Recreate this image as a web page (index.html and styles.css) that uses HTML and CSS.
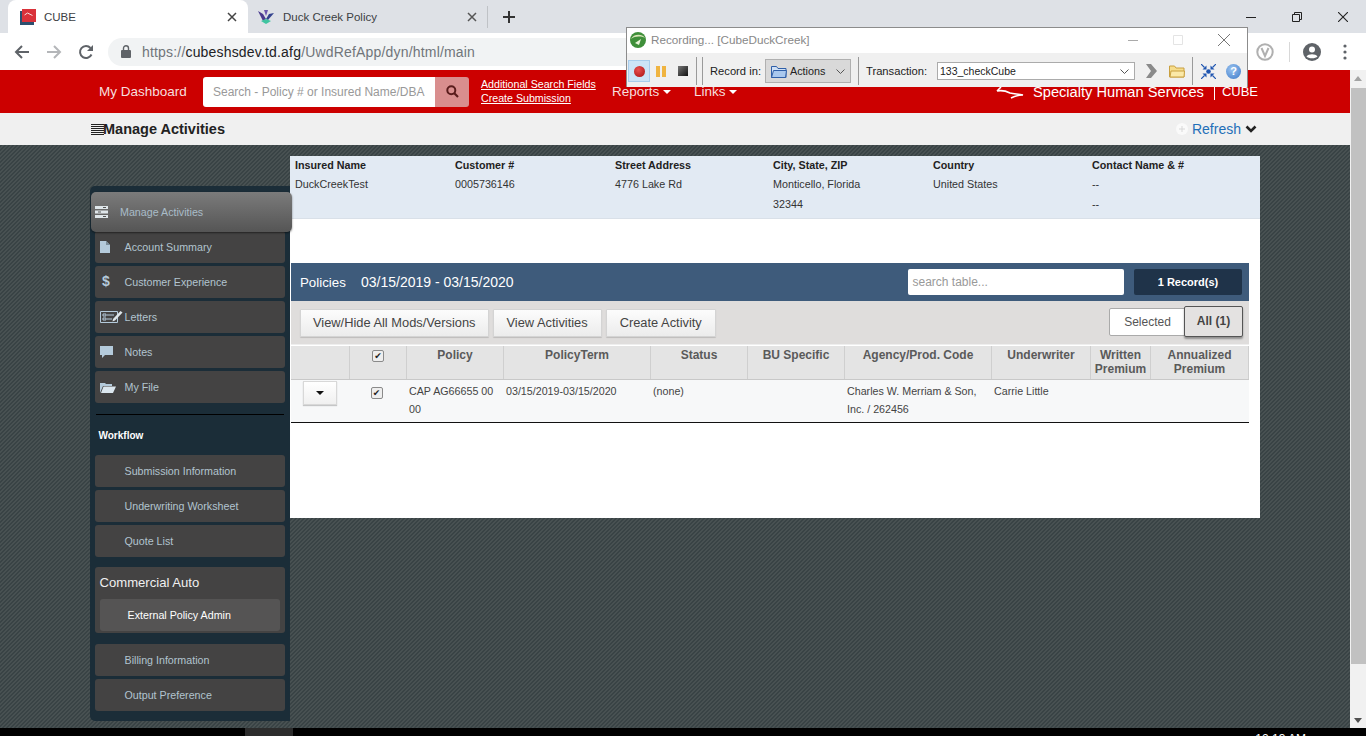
FILE: index.html
```html
<!doctype html>
<html>
<head>
    <meta charset="utf-8">
    <title>CUBE</title>
    <link rel="stylesheet" href="styles.css">
</head>
<body>

<!-- browser frame -->
<div class="tabstrip">
    <div class="tab tab-active">
        <svg class="favicon" width="16" height="16" viewBox="0 0 16 16"><rect x="0" y="2" width="14" height="14" fill="#2c4f6e"/><rect x="2" y="0" width="14" height="13" fill="#d9323a"/><path d="M4.5 6l3-2 5 2.5" stroke="#f8dcdc" fill="none"/></svg>
        <span class="tab-title">CUBE</span>
        <svg class="tab-x" width="10" height="10" viewBox="0 0 10 10"><path d="M1 1l8 8M9 1l-8 8" stroke="#444" stroke-width="1.5"/></svg>
    </div>
    <div class="tab">
        <svg class="favicon" width="16" height="14" viewBox="0 0 16 14"><path d="M0 1l5 3 3 5-3 2z" fill="#4a3a8e"/><path d="M16 3l-5 1-3 5 2 1z" fill="#33428e"/><path d="M6 0l2 6 2-6z" fill="#6a55ae"/><path d="M3 11l5-2 5 2-5 3z" fill="#3fc4a0"/></svg>
        <span class="tab-title">Duck Creek Policy</span>
        <svg class="tab-x" width="10" height="10" viewBox="0 0 10 10"><path d="M1 1l8 8M9 1l-8 8" stroke="#555" stroke-width="1.5"/></svg>
    </div>
    <span class="tab-sep"></span>
    <svg class="tab-new" width="12" height="12" viewBox="0 0 12 12"><path d="M6 0v12M0 6h12" stroke="#333" stroke-width="2"/></svg>
    <div class="win-btns">
        <svg width="10" height="10" viewBox="0 0 10 10"><path d="M0 5.5h10" stroke="#222"/></svg>
        <svg width="10" height="10" viewBox="0 0 10 10"><path d="M.5 2.5h7v7h-7zM2.5 2.5v-2h7v7h-2" fill="none" stroke="#222"/></svg>
        <svg width="10" height="10" viewBox="0 0 10 10"><path d="M0 0l10 10M10 0L0 10" stroke="#222" stroke-width="1.1"/></svg>
    </div>
</div>
<div class="toolbar">
    <svg class="nav-btn" width="16" height="16" viewBox="0 0 16 16"><path d="M15 8H2M8 2L2 8l6 6" fill="none" stroke="#5f6368" stroke-width="2"/></svg>
    <svg class="nav-btn" width="16" height="16" viewBox="0 0 16 16"><path d="M1 8h13M8 2l6 6-6 6" fill="none" stroke="#b4b6b9" stroke-width="2"/></svg>
    <svg class="nav-btn" width="16" height="16" viewBox="0 0 16 16"><path d="M13.5 10.5A6 6 0 1 1 12.5 4" fill="none" stroke="#5f6368" stroke-width="2"/><path d="M15 1v6H9z" fill="#5f6368"/></svg>
    <div class="omnibox">
        <svg width="10" height="13" viewBox="0 0 10 13"><rect x="0" y="5" width="10" height="8" rx="1" fill="#5f6368"/><path d="M2.5 5V3.2a2.5 2.5 0 0 1 5 0V5" fill="none" stroke="#5f6368" stroke-width="1.4"/></svg>
        <span class="url"><i>https://</i>cubeshsdev.td.afg<i>/UwdRefApp/dyn/html/main</i></span>
    </div>
    <div class="toolbar-right">
        <svg width="18" height="18" viewBox="0 0 18 18"><circle cx="9" cy="9" r="7.7" fill="none" stroke="#b0b0b0" stroke-width="2"/><path d="M5.5 5l3.5 8 3.5-8" fill="none" stroke="#b0b0b0" stroke-width="2"/></svg>
        <span class="toolbar-sep"></span>
        <svg width="20" height="20" viewBox="0 0 20 20"><circle cx="10" cy="10" r="9" fill="#5f6368"/><circle cx="10" cy="7.5" r="3" fill="#fff"/><path d="M4.5 14.5c2-3 9-3 11 0-2 2.4-9 2.4-11 0z" fill="#fff"/></svg>
        <svg class="toolbar-dots" width="4" height="16" viewBox="0 0 4 16"><circle cx="2" cy="2" r="1.6" fill="#5f6368"/><circle cx="2" cy="8" r="1.6" fill="#5f6368"/><circle cx="2" cy="14" r="1.6" fill="#5f6368"/></svg>
    </div>
</div>

<div class="viewport">
    <div class="page">
        <div class="header">
            <a class="dash">My Dashboard</a>
            <div class="search">
                <span class="search-input">Search - Policy # or Insured Name/DBA</span>
                <span class="search-btn"><svg width="13" height="13" viewBox="0 0 13 13"><circle cx="5.3" cy="5.3" r="4" fill="none" stroke="#5a1c1c" stroke-width="2"/><path d="M8.3 8.3L12 12" stroke="#5a1c1c" stroke-width="2.2"/></svg></span>
            </div>
            <div class="search-links">
                <a>Additional Search Fields</a>
                <a>Create Submission</a>
            </div>
            <a class="menu">Reports <b class="caret"></b></a>
            <a class="menu menu-links">Links <b class="caret"></b></a>
            <div class="brand">
                <svg width="30" height="16" viewBox="0 0 30 16"><path d="M1 7L5 3M1 7c5-1 9 0 13 2 4 1 8 1 13 2-4 0-8 1-12 3" fill="none" stroke="#fff" stroke-width="1.6"/></svg>
                <span class="brand-name">Specialty Human Services</span>
                <span class="brand-bar"></span>
                <span class="brand-cube">CUBE</span>
            </div>
        </div>
        <div class="subheader">
            <svg width="13" height="11" viewBox="0 0 13 11"><path d="M0 .5h13M0 2.5h13M0 4.5h13M0 6.5h13M0 8.5h13M0 10.5h13" stroke="#222"/></svg>
            <span class="sub-title">Manage Activities</span>
            <div class="sub-right">
                <svg width="12" height="12" viewBox="0 0 12 12"><circle cx="6" cy="6" r="6" fill="#fafafa"/><path d="M6 3v6M3 6h6" stroke="#d8d8d8"/></svg>
                <a class="refresh">Refresh</a>
                <svg width="12" height="9" viewBox="0 0 12 9"><path d="M1.5 1.5L6 6l4.5-4.5" fill="none" stroke="#222" stroke-width="2.6"/></svg>
            </div>
        </div>

        <div class="main">
            <div class="sidebar">
                <div class="nav-item nav-active">
                    <span class="nav-ico"><svg width="13" height="12" viewBox="0 0 13 12"><path d="M0 0h13v3H0zM0 4.5h13v3H0zM0 9h13v3H0z" fill="#dfe6ea"/><path d="M8 1.5h3M3 6h3M8 10.5h3" stroke="#555"/></svg></span>
                    Manage Activities
                </div>
                <div class="nav-list">
                    <div class="nav-item"><span class="nav-ico"><svg width="10" height="12" viewBox="0 0 10 12"><path d="M0 0h6l4 4v8H0z" fill="#b4cadb"/><path d="M6 0v4h4" fill="#7b8d9a"/></svg></span>Account Summary</div>
                    <div class="nav-item"><span class="nav-ico nav-dollar">$</span>Customer Experience</div>
                    <div class="nav-item"><span class="nav-ico"><svg width="23" height="13" viewBox="0 0 23 13"><path d="M.5 1.5h17v11H.5z" fill="none" stroke="#b4cadb"/><path d="M3 4h3v2H3zM3 8h3v2H3zM7 5h7M7 9h5" stroke="#b4cadb" fill="none"/><path d="M13 9L20.5 1 22.5 2.5 15 10.5l-2.5 1z" fill="#dfe6ea"/></svg></span>Letters</div>
                    <div class="nav-item"><span class="nav-ico"><svg width="13" height="12" viewBox="0 0 13 12"><path d="M0 0h13v9H5l-3 3V9H0z" fill="#b4cadb"/></svg></span>Notes</div>
                    <div class="nav-item"><span class="nav-ico"><svg width="16" height="12" viewBox="0 0 16 12"><path d="M0 12V2h5l1 1h6v2H3z" fill="#b4cadb"/><path d="M3.5 5.5H16L13 12H1z" fill="#dbe6ee"/></svg></span>My File</div>
                </div>
                <div class="nav-rule"></div>
                <div class="nav-head">Workflow</div>
                <div class="nav-list">
                    <div class="nav-item">Submission Information</div>
                    <div class="nav-item">Underwriting Worksheet</div>
                    <div class="nav-item">Quote List</div>
                </div>
                <div class="nav-group">
                    <div class="group-title">Commercial Auto</div>
                    <div class="nav-item group-item">External Policy Admin</div>
                </div>
                <div class="nav-list">
                    <div class="nav-item">Billing Information</div>
                    <div class="nav-item">Output Preference</div>
                </div>
            </div>

            <div class="content">
                <div class="info">
                    <div><b>Insured Name</b><span>DuckCreekTest</span></div>
                    <div><b>Customer #</b><span>0005736146</span></div>
                    <div><b>Street Address</b><span>4776 Lake Rd</span></div>
                    <div><b>City, State, ZIP</b><span>Monticello, Florida</span><span>32344</span></div>
                    <div><b>Country</b><span>United States</span></div>
                    <div><b>Contact Name &amp; #</b><span>--</span><span>--</span></div>
                </div>
                <div class="policies">
                    <div class="pol-bar">
                        <span class="pol-name">Policies</span>
                        <span class="pol-dates">03/15/2019 - 03/15/2020</span>
                        <span class="pol-search">search table...</span>
                        <span class="pol-count">1 Record(s)</span>
                    </div>
                    <div class="pol-tools">
                        <span class="btn">View/Hide All Mods/Versions</span>
                        <span class="btn">View Activities</span>
                        <span class="btn">Create Activity</span>
                        <div class="toggle">
                            <span class="toggle-off">Selected</span>
                            <span class="toggle-on">All (1)</span>
                        </div>
                    </div>
                    <div class="tbl-head tbl-cols">
                        <div></div>
                        <div><input type="checkbox" class="check" checked></div>
                        <div>Policy</div>
                        <div>PolicyTerm</div>
                        <div>Status</div>
                        <div>BU Specific</div>
                        <div>Agency/Prod. Code</div>
                        <div>Underwriter</div>
                        <div>Written Premium</div>
                        <div>Annualized Premium</div>
                    </div>
                    <div class="tbl-row tbl-cols">
                        <div><span class="row-btn"><b class="caret caret-dark"></b></span></div>
                        <div class="cell-check"><input type="checkbox" class="check" checked></div>
                        <div>CAP AG66655 00 00</div>
                        <div>03/15/2019-03/15/2020</div>
                        <div class="cell-status">(none)</div>
                        <div></div>
                        <div>Charles W. Merriam &amp; Son, Inc. / 262456</div>
                        <div>Carrie Little</div>
                        <div></div>
                        <div></div>
                    </div>
                </div>
            </div>
        </div>
    </div>
    <div class="scrollbar">
        <b class="arrow-up"></b>
        <div class="thumb"></div>
        <b class="arrow-down"></b>
    </div>
</div>

<div class="taskbar">
    <span class="task-slot"></span>
    <span class="task-clock">12:13 AM</span>
</div>

<!-- recorder window floats over the browser -->
<div class="recorder">
    <div class="rec-title">
        <svg width="16" height="16" viewBox="0 0 16 16"><circle cx="8" cy="8" r="8" fill="#3f8f3a"/><path d="M1 7c2-5 11-6 14-1-4-2-10-2-14 1z" fill="#d8e6b8"/><path d="M5 11l6-4-2 6z" fill="#eaf4d8"/></svg>
        <span class="rec-name">Recording... [CubeDuckCreek]</span>
        <div class="rec-btns">
            <svg width="10" height="10" viewBox="0 0 10 10"><path d="M0 5.5h10" stroke="#aaa"/></svg>
            <svg width="10" height="10" viewBox="0 0 10 10"><path d="M.5.5h9v9h-9z" fill="none" stroke="#e4e4e4"/></svg>
            <svg width="12" height="12" viewBox="0 0 12 12"><path d="M0 0l12 12M12 0L0 12" stroke="#777"/></svg>
        </div>
    </div>
    <div class="rec-tools">
        <span class="rec-record"><i></i></span>
        <svg class="rec-pause" width="10" height="11" viewBox="0 0 10 11"><path d="M0 0h4v11H0zM6 0h4v11H6z" fill="#f0b440"/></svg>
        <span class="rec-stop"></span>
        <span class="rec-sep rec-sep-a"></span>
        <span class="rec-sep rec-sep-b"></span>
        <span class="rec-label">Record in:</span>
        <span class="rec-actions">
            <svg width="16" height="13" viewBox="0 0 16 13"><path d="M.5 12.5V1.5h5l1.5 2h8v9z" fill="#cfe0f5" stroke="#2f5fa8"/><path d="M.5 12.5l2-7h13l-1 7z" fill="#a9c8ee" stroke="#2f5fa8"/></svg>
            Actions
            <svg class="rec-chev" width="9" height="5" viewBox="0 0 9 5"><path d="M.5.5l4 4 4-4" fill="none" stroke="#555"/></svg>
        </span>
        <span class="rec-sep rec-sep-c"></span>
        <span class="rec-label rec-label-t">Transaction:</span>
        <span class="rec-combo">133_checkCube
            <svg class="rec-chev" width="9" height="5" viewBox="0 0 9 5"><path d="M.5.5l4 4 4-4" fill="none" stroke="#555"/></svg>
        </span>
        <svg class="rec-go" width="11" height="14" viewBox="0 0 11 14"><path d="M0 0h5l6 7-6 7H0l5-7z" fill="#8a8a8a"/></svg>
        <svg class="rec-open" width="16" height="14" viewBox="0 0 16 14"><path d="M.5 13V2h5l1.5 2h8v9z" fill="#f6dd8c" stroke="#c9a040"/><path d="M1 13l1-6h13.5l-.5 6z" fill="#fbe9a8" stroke="#c9a040"/></svg>
        <span class="rec-sep rec-sep-d"></span>
        <svg class="rec-fit" width="15" height="15" viewBox="0 0 15 15"><circle cx="7.5" cy="7.5" r="2.3" fill="#1f55b0"/><path d="M0 0l3.5 3.5M15 0l-3.5 3.5M0 15l3.5-3.5M15 15l-3.5-3.5" stroke="#1f55b0" stroke-width="1.2"/><path d="M5.5 1.5v4h-4zM9.5 1.5v4h4zM5.5 13.5v-4h-4zM9.5 13.5v-4h4z" fill="#1f55b0"/></svg>
        <span class="rec-help">?</span>
    </div>
</div>

</body>
</html>
```

FILE: styles.css
```css
*{margin: 0; padding: 0; box-sizing: border-box;}
html,body{width: 100%; height: 100%; overflow: hidden;}
body{font-family: "Liberation Sans", Arial, sans-serif; font-size: 11px; color: #333; background: #000; position: relative;}
i{font-style: normal;}

/* browser frame */
.tabstrip{height: 33px; background: #dee1e6; display: flex; align-items: center; padding-left: 8px; font-size: 11.5px; color: #3c4043;}
.tab{width: 240px; height: 33px; display: flex; align-items: center; padding: 0 11px 0 12px; border-radius: 8px 8px 0 0;}
.tab-active{background: #fff;}
.tab-title{margin-left: 8px; flex: 1;}
.tab + .tab .tab-title{margin-left: 9px;}
.tab + .tab .favicon{margin-left: -2px;}
.tab-sep{width: 1px; height: 22px; background: #bfc2c6; margin-left: -1px;}
.tab-new{margin-left: 15px;}
.win-btns{margin-left: auto; display: flex; gap: 36px; padding-right: 18px;}
.toolbar{height: 37px; background: #fff; display: flex; align-items: center; padding-left: 14px;}
.nav-btn{margin-right: 16px;}
.omnibox{width: 1140px; height: 28px; margin-left: -2px; border-radius: 14px; background: #f1f3f4; display: flex; align-items: center; padding-left: 13px; flex: none;}
.url{margin-left: 11px; font-size: 14px; letter-spacing: .18px; color: #202124;}
.url i{color: #70757a;}
.toolbar-right{display: flex; align-items: center; margin-left: 8px;}
.toolbar-sep{width: 1px; height: 20px; background: #d8d8d8; margin: 0 12px 0 15px;}
.toolbar-dots{margin-left: 21px;}

/* viewport */
.viewport{height: 658px; display: flex;}
.page{flex: 1; min-width: 0; display: flex; flex-direction: column; background: repeating-linear-gradient(135deg, #394345 0, #394345 1.414px, #485152 1.414px, #485152 2.828px);}
.scrollbar{width: 16px; background: #f1f1f1; display: flex; flex-direction: column; align-items: center; padding-top: 6px;}
.arrow-up{border: 4px solid transparent; border-top: 0; border-bottom: 5px solid #a3a3a3; margin-bottom: 7px;}
.thumb{width: 15px; height: 576px; background: #c1c1c1;}
.arrow-down{border: 4px solid transparent; border-bottom: 0; border-top: 5px solid #505050; margin-top: auto; margin-bottom: 5px;}
.taskbar{height: 8px; overflow: hidden; display: flex; padding-left: 245px; background: #000;}
.task-slot{width: 48px; background: #2c2c2c;}
.task-clock{margin-left: auto; margin-right: 60px; padding-top: 4px; color: #fff; font-size: 12px; line-height: 14px;}

/* red header */
.header{height: 43px; background: #cc0000; display: flex; align-items: center; padding-left: 99px; color: #fff; flex: none;}
.dash{font-size: 13.5px; color: #f6dede; width: 104px; flex: none;}
.search{width: 266px; height: 30px; display: flex; border-radius: 3px; overflow: hidden; flex: none;}
.search-input{width: 232px; background: #fff; padding-left: 10px; line-height: 30px; font-size: 12px; color: #999;}
.search-btn{width: 34px; background: #d98e8e; display: flex; align-items: center; justify-content: center;}
.search-links{margin-left: 12px; width: 131px; display: flex; flex-direction: column; flex: none; line-height: 14px; padding-bottom: 2px;}
.search-links a{text-decoration: underline; font-size: 10.65px;}
.menu{font-size: 13.5px; color: #f6dede; white-space: nowrap;}
.menu-links{margin-left: 23px;}
.caret{display: inline-block; vertical-align: middle; border: 4px solid transparent; border-top: 4px solid #fff; border-bottom: 0;}
.caret-dark{border-top-color: #111;}
.brand{margin-left: auto; padding-right: 92px; display: flex; align-items: center;}
.brand-name{font-size: 14.65px; margin-left: 7px;}
.brand-bar{width: 1px; height: 15px; background: #fff; margin: 2px 7px 0 10px;}
.brand-cube{font-size: 13px;}

.subheader{height: 32px; background: #f0f0f0; display: flex; align-items: center; padding-left: 91px; flex: none;}
.sub-title{font-size: 14.5px; font-weight: bold; color: #222; margin-left: -1px;}
.sub-right{margin-left: auto; padding-right: 93px; display: flex; align-items: center; gap: 4px;}
.refresh{font-size: 14px; color: #1f6fb8;}

/* main */
.main{flex: 1; min-height: 0; display: flex; padding-left: 90px;}
.sidebar{width: 200px; height: 535px; margin-top: 41px; padding-top: 6px; background: #1b2d38; border-radius: 5px 0 0 5px; flex: none; display: flex; flex-direction: column; align-items: flex-start;}
.nav-list{display: flex; flex-direction: column; gap: 3px; margin-left: 5px;}
.nav-item{width: 190px; height: 32px; padding-left: 29.5px; display: flex; align-items: center; background: #444343; border-radius: 3px; color: #b2c4cf; font-size: 10.7px;}
.nav-ico{flex: none; width: 25px; margin-left: -25px; display: flex; align-items: center; margin-top: -1px;}
.nav-dollar{display: block; padding-left: 2.5px; font-size: 14px; font-weight: bold; color: #b4cadb; margin-top: -3px;}
.nav-active{width: 201px; height: 40px; margin-left: 1px; margin-bottom: -1px; padding-left: 29px; z-index: 2; position: relative; border-radius: 5px; background: linear-gradient(#7b7b7b, #555); box-shadow: 0 1px 2px rgba(0,0,0,.5); color: #a9bcc8;}
.nav-rule{width: 188px; height: 1px; margin: 11px 0 0 6px; background: #000;}
.nav-head{height: 40px; line-height: 41px; padding-left: 8.5px; font-weight: bold; font-size: 10px; color: #fff;}
.nav-group{width: 190px; height: 66px; margin: 10px 0 11px 5px; padding: 8px 5px 0 4.5px; border-radius: 3px; background: #444343;}
.group-title{font-size: 13.1px; line-height: 16px; margin-bottom: 8px; color: #f0f0f0;}
.group-item{width: 180px; margin-left: .5px; padding-left: 27.5px; background: #555454; color: #fff;}

/* content */
.content{width: 970px; height: 362px; margin-top: 11px; background: #fff; flex: none;}
.info{height: 63px; background: #e2eaf3; display: grid; grid-template-columns: 160px 160px 158px 160px 159px 1fr; padding-left: 5px; font-size: 10.75px; border-bottom: 1px solid #d9e0e8;}
.info b, .info span{display: block; white-space: nowrap;}
.info b{color: #222; line-height: 18.5px;}
.info span{line-height: 19.5px;}
.info span + span{margin-top: 1px;}
.policies{width: 958px; margin: 44px 0 0 1px;}
.pol-bar{height: 38px; background: #3e5b7b; display: flex; align-items: center; padding: 0 7px 0 9px; color: #fff;}
.pol-name{font-size: 13.3px; width: 61px;}
.pol-dates{font-size: 14px;}
.pol-search{width: 216px; height: 26px; margin-left: auto; line-height: 26px; padding-left: 4.5px; background: #fff; color: #999; font-size: 12px; border-radius: 2px;}
.pol-count{width: 108px; height: 26px; margin-left: 10px; line-height: 26px; text-align: center; background: #1f3349; font-weight: bold; border-radius: 2px;}
.pol-tools{height: 44px; background: #dfdddc; display: flex; align-items: center; padding: 0 6px 0 9px; gap: 4px; border-bottom: 1px solid #eee; margin-bottom: 1px;}
.btn{height: 28px; line-height: 26px; padding: 0 12px; background: linear-gradient(#fcfcfc, #ececec); color: #444; font-size: 12.85px; border: 1px solid #d4d4d4; border-radius: 1px; box-shadow: 0 1px 1px rgba(0,0,0,.15);}
.btn + .btn{padding: 0 13px;}
.toggle{margin-left: auto; margin-top: -2px; display: flex; align-items: center; font-size: 12px;}
.toggle-off{width: 77px; height: 28px; line-height: 26px; text-align: center; background: #fff; border: 1px solid #aaa; border-radius: 2px 0 0 2px; color: #555;}
.toggle-on{width: 59px; height: 31px; margin-left: -2px; line-height: 28px; text-align: center; font-weight: bold; color: #444; background: #e4e2e1; border: 1px solid #555; border-radius: 2px; box-shadow: 0 2px 2px rgba(0,0,0,.35); position: relative;}

/* table */
.tbl-cols{display: grid; grid-template-columns: 59px 57px 97px 147px 97px 97px 147px 99px 60px 98px;}
.tbl-head{height: 34px; background: #e4e4e4; border-bottom: 1px solid #c8c8c8; font-size: 12px; font-weight: bold; color: #5a5a5a; line-height: 14px; text-align: center;}
.tbl-head > div{padding-top: 2px; border-right: 1px solid #cfcfcf;}
.tbl-row{height: 43px; background: #f7f8f9; border-bottom: 1px solid #111; line-height: 18px; color: #444; font-size: 10.7px;}
.tbl-row > div{padding: 2px 2px 0;}
.tbl-row .cell-check{text-align: center; padding: 5px 4px 0 0;}
.row-btn{display: flex; align-items: center; justify-content: center; width: 34px; height: 24px; margin: -1px 0 0 10px; background: linear-gradient(#fff, #f0f0f0); border: 1px solid #d8d8d8; box-shadow: 0 1px 1px rgba(0,0,0,.2);}
.check{appearance: none; display: inline-block; width: 12px; height: 12px; vertical-align: top; margin-top: 2px; border: 1px solid #8a8a8a; border-radius: 2px; background: #eee; text-align: center;}
.check:checked::after{content: "\2714"; display: block; font: 9px/10px "DejaVu Sans", sans-serif; color: #222;}

/* recorder window */
.recorder{position: absolute; left: 626px; top: 27px; width: 622px; height: 60px; background: #f0f0f0; border: 1px solid #8c8c8c; border-bottom: 0; font-size: 11.2px; color: #222;}
.rec-title{height: 25px; background: #fff; display: flex; align-items: center; padding: 0 0 2px 3px;}
.rec-name{margin-left: 5px; font-size: 11.7px; color: #888;}
.rec-btns{margin-left: auto; display: flex; align-items: center; gap: 35px; padding-right: 17px;}
.rec-tools{height: 34px; display: flex; align-items: center; padding: 2px 0 0 1px;}
.rec-record{width: 22px; height: 22px; display: flex; align-items: center; justify-content: center; background: #cce4f7; border: 1px solid #a8cdec;}
.rec-record i{width: 11px; height: 11px; border-radius: 50%; background: radial-gradient(circle at 40% 35%, #e85050, #a81010);}
.rec-pause{margin-left: 6px;}
.rec-stop{width: 10px; height: 10px; margin-left: 12px; background: linear-gradient(135deg, #777, #111);}
.rec-sep{width: 1px; height: 28px; background: #9a9a9a; flex: none;}
.rec-sep-a{margin-left: 8px;}
.rec-sep-b{margin-left: 5px;}
.rec-label{width: 49px; margin-left: 7px; white-space: nowrap; flex: none;}
.rec-actions{width: 86px; height: 24px; margin-left: 6px; display: flex; align-items: center; gap: 3px; padding-left: 5px; background: #d9d9d9; border: 1px solid #b0b0b0; font-size: 10.8px; flex: none;}
.rec-chev{margin-left: auto; margin-right: 5px;}
.rec-sep-c{margin-left: 7px;}
.rec-label-t{width: 61px; margin-left: 7px;}
.rec-combo{width: 198px; height: 18px; margin-left: 10px; display: flex; align-items: center; padding-left: 2px; background: #fff; border: 1px solid #ababab; font-size: 10.5px; flex: none;}
.rec-go{margin-left: 11px;}
.rec-open{margin-left: 12px;}
.rec-sep-d{margin-left: 7px;}
.rec-fit{margin-left: 8px;}
.rec-help{width: 15px; height: 15px; margin-left: 10px; border-radius: 50%; background: radial-gradient(circle at 40% 35%, #9cc4f0, #3a78c8); color: #fff; font-weight: bold; font-size: 11px; line-height: 15px; text-align: center;}
```
